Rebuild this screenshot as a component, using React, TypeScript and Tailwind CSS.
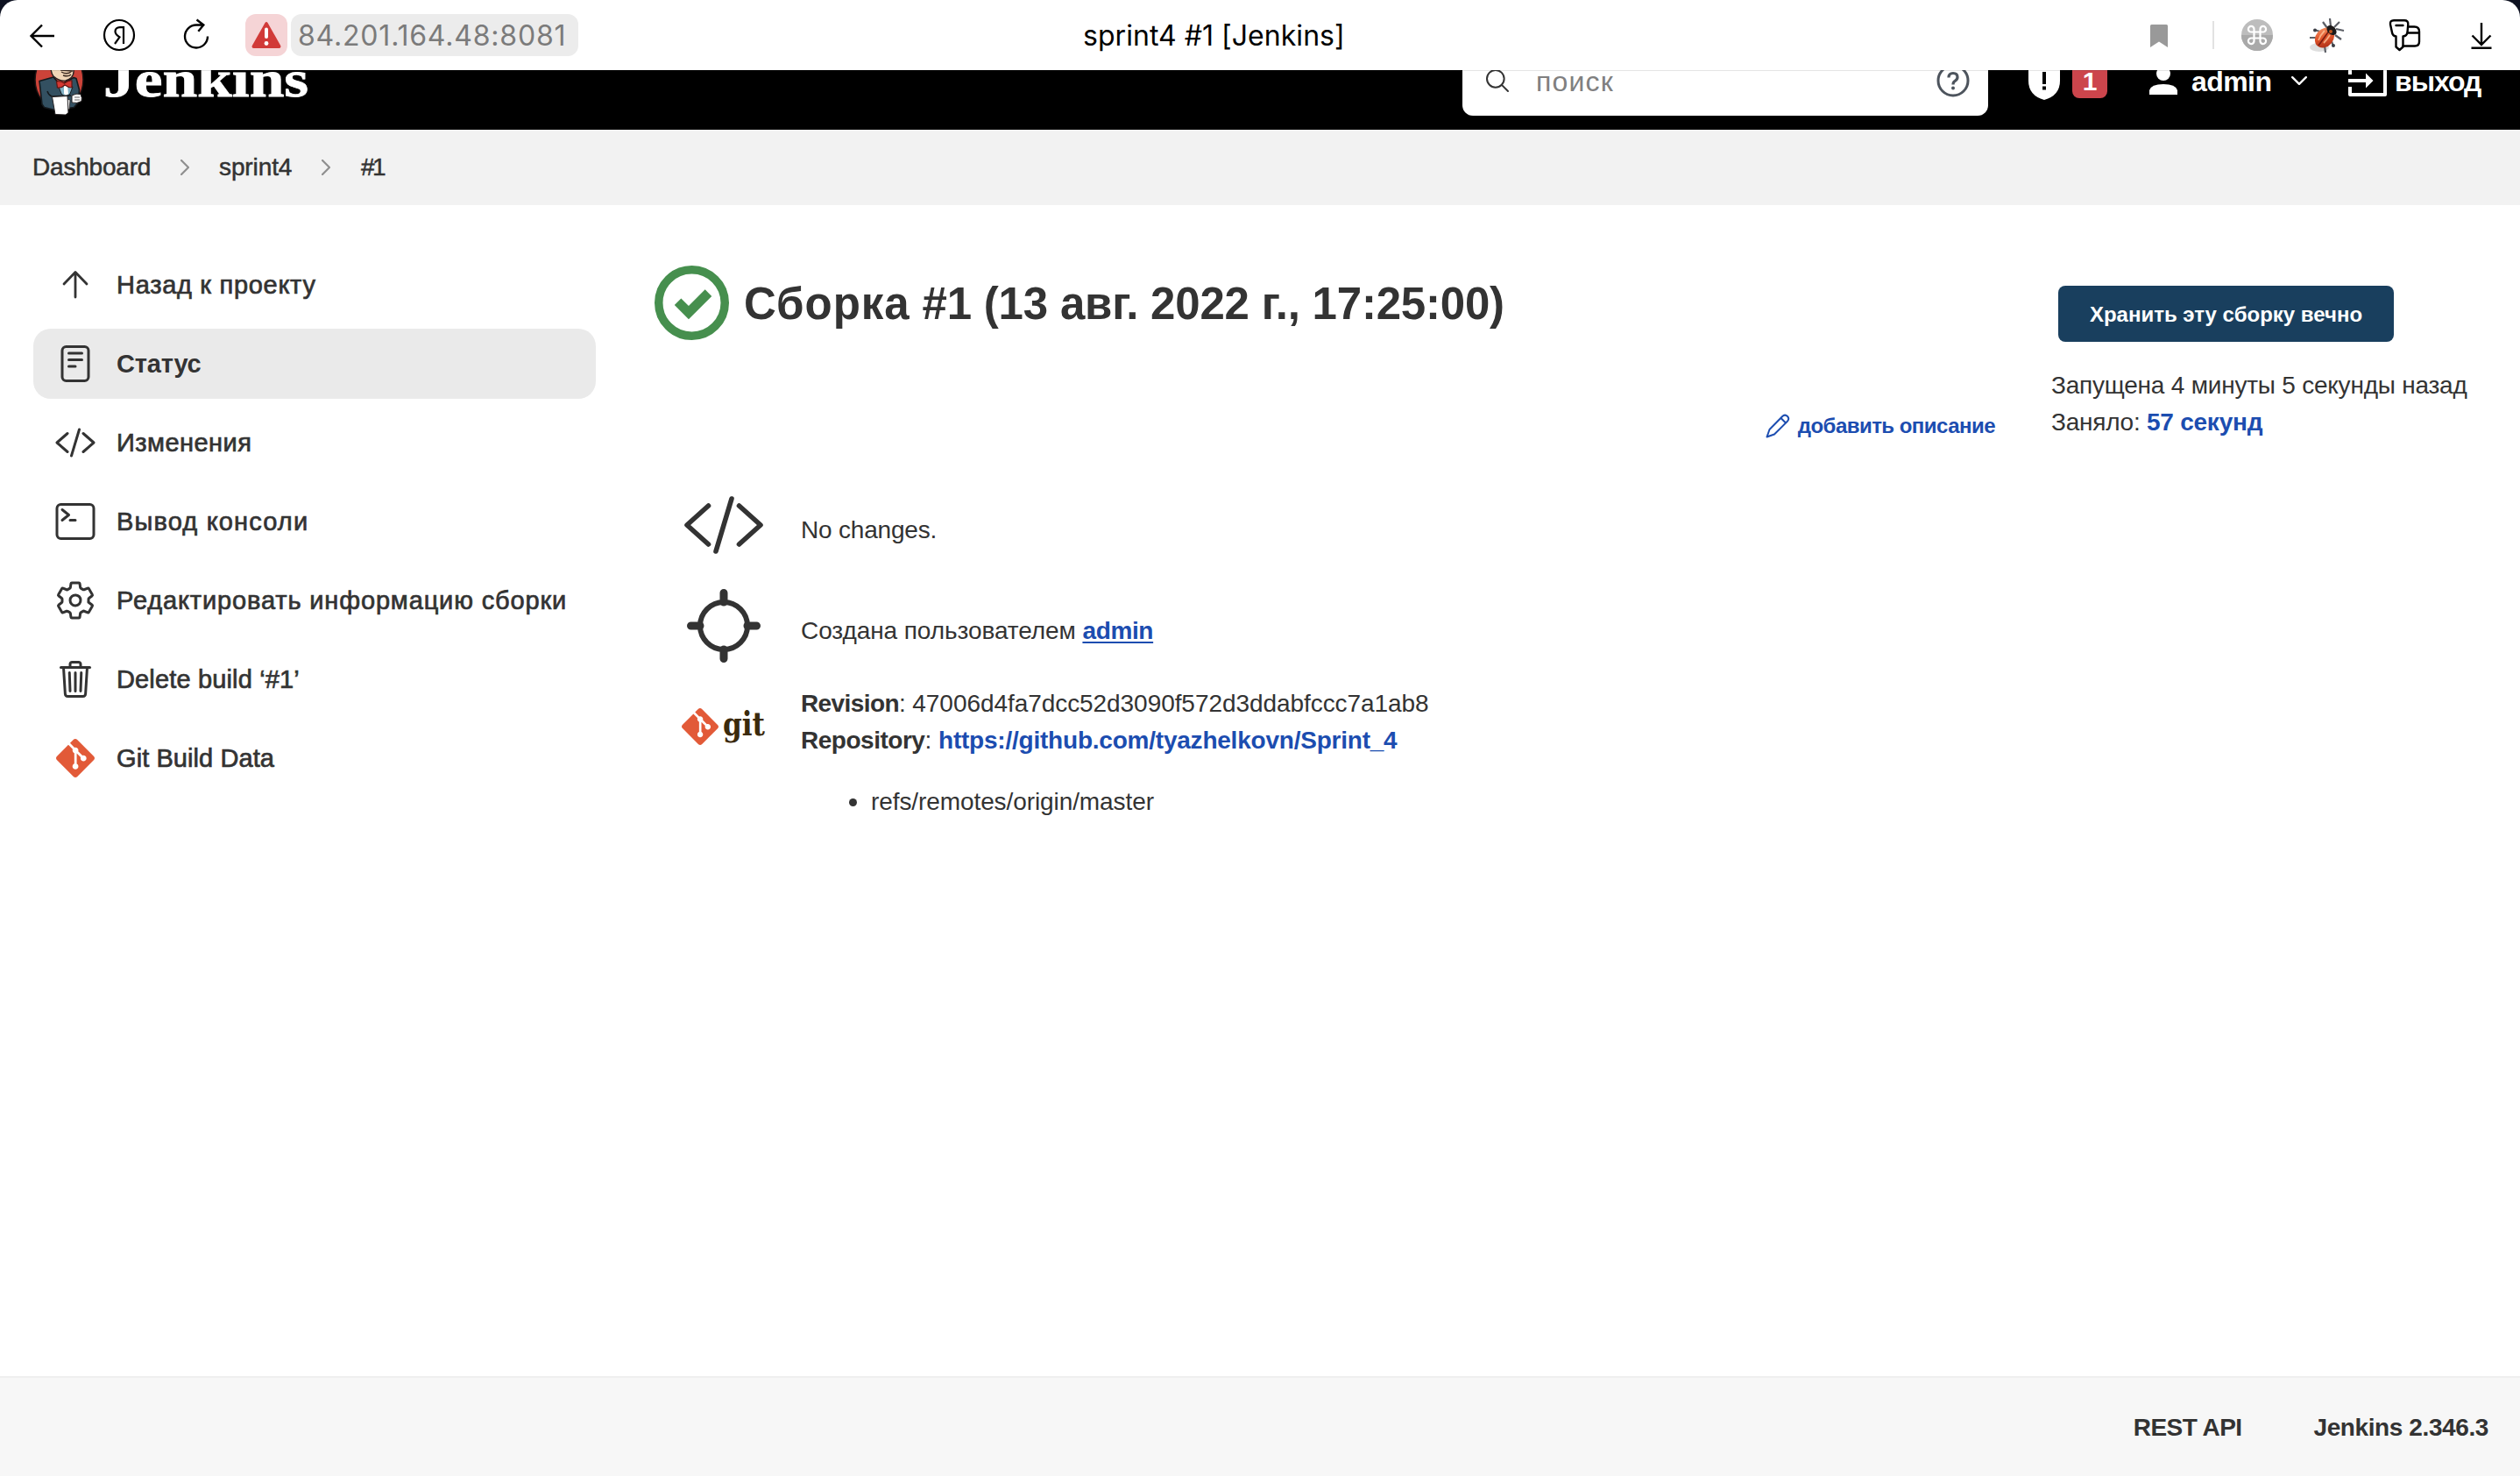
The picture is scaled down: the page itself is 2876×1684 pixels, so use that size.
import React from "react";
import {
  IoCodeSlashOutline,
  IoReaderOutline,
  IoSearchOutline,
  IoSettingsOutline,
  IoTerminalOutline,
  IoTrashOutline,
} from "react-icons/io5";
import { SiGit } from "react-icons/si";

function BrowserBar() {
  return (
    <div className="h-20 shrink-0 bg-[#0d1120]">
      <div className="flex h-20 items-center rounded-t-[20px] bg-white pr-6 pl-7 font-['Inter',sans-serif] text-[32px] leading-[40px]">
        <div className="flex w-[1208px] items-center">
          <div className="flex items-center gap-12">
            <svg className="size-10" viewBox="0 0 40 40" fill="none" stroke="#000" strokeWidth="2.4">
              <path d="M20 8.500 7.500 21 20 33.500M7.500 21H34" />
            </svg>
            <svg className="size-10" viewBox="0 0 40 40" fill="none" stroke="#000" strokeWidth="2.200">
              <circle cx="20" cy="20" r="17" />
              <path d="M25 30V11.200h-4.200c-3.600 0-5.300 2-5.300 4.800 0 2.600 1.300 4 5 6.400L15 30" />
            </svg>
            <svg className="size-10" viewBox="0 0 40 40" fill="none" stroke="#000" strokeWidth="2.400">
              <path d="M28 8.500H20.500A13 13 0 1 0 33 21.500M20.500 2.500l7.800 6-6 7.200" />
            </svg>
          </div>
          <div className="ml-9 flex h-12 w-12 items-center justify-center rounded-xl bg-[#f5d4d6]">
            <svg className="h-[30px] w-[34px]" viewBox="0 0 34 30">
              <path d="M15.500 1Q17 -1 18.500 1L33.200 27Q34 30 31 30H3Q0 30 .8 27Z" fill="#d13a38" />
              <path d="M17 8.500v8.500" stroke="#fff" strokeWidth="4" strokeLinecap="round" />
              <circle cx="17" cy="24.500" r="2.400" fill="#fff" />
            </svg>
          </div>
          <div className="ml-1 flex h-12 w-[328px] items-center rounded-xl bg-[#ececec] pt-[2px] pl-2 tracking-[0.8px] whitespace-nowrap text-[#7b7b7b]">
            84.201.164.48:8081
          </div>
        </div>
        <div className="pt-[2px] tracking-[0.04px] whitespace-nowrap text-black">sprint4 #1 [Jenkins]</div>
        <div className="ml-auto flex items-center">
          <svg className="size-10" viewBox="0 0 40 40">
            <path d="M10 9.500Q10 8 11.500 8h17Q30 8 30 9.500V34l-10-6.500L10 34Z" fill="#999" />
          </svg>
          <div className="ml-[41px] h-8 w-[2px] bg-[#e2e2e2]" />
          <svg className="ml-[29px] size-10" viewBox="0 0 40 40">
            <circle cx="20" cy="20" r="18" fill="#bdbdbd" />
            <path d="M2 20a18 18 0 0 0 36 0Z" fill="#a9a9a9" />
            <path
              d="M16.500 16.500h7v7h-7ZM16.500 16.500h-3a3.300 3.300 0 1 1 3-3.200ZM23.500 16.500v-3.200a3.300 3.300 0 1 1 3 3.200ZM23.500 23.500h3a3.300 3.300 0 1 1-3 3.200ZM16.500 23.500v3.200a3.300 3.300 0 1 1-3-3.200Z"
              fill="none"
              stroke="#fff"
              strokeWidth="2.200"
            />
          </svg>
          <svg className="ml-10 size-10" viewBox="0 0 40 40">
            <defs>
              <linearGradient id="shell" x1="0" y1="0" x2="1" y2="1">
                <stop offset="0" stopColor="#f8a070" />
                <stop offset=".5" stopColor="#e0542a" />
                <stop offset="1" stopColor="#9c2412" />
              </linearGradient>
            </defs>
            <ellipse cx="11" cy="34" rx="11" ry="5" fill="#000" opacity=".13" />
            <path
              d="M24 10l-1-9M28 11l6-6M30 13l9 2M20 12l-5-7M29 20l7 5M25 27l2 6M12 16l-7-2M8 23H0M17 32l1 8"
              stroke="#5c5f66"
              strokeWidth="2.200"
              fill="none"
            />
            <circle cx="6" cy="14.500" r="2" fill="#3c3f46" />
            <circle cx="27" cy="32" r="2" fill="#3c3f46" />
            <ellipse cx="17" cy="23" rx="10" ry="12.500" transform="rotate(40 17 23)" fill="url(#shell)" />
            <path d="M23 14 10 32" stroke="#7c1c10" strokeWidth="1.600" />
            <path d="M17 15q-5 5-7 11M23 20q-3 5-7 9" stroke="#ffc9a0" strokeWidth="1.800" fill="none" opacity=".75" />
            <ellipse cx="25" cy="14.500" rx="6.500" ry="4.500" transform="rotate(45 25 14.500)" fill="#1d1a1a" />
            <circle cx="24" cy="16" r="2" fill="#c2571f" />
          </svg>
          <svg className="ml-12 size-10" viewBox="0 0 40 40" fill="none" stroke="#000" strokeWidth="2.400" strokeLinejoin="round" strokeLinecap="round">
            <path d="M8 3.200h12q4.500 0 4.300 4.500L23.500 17q-.5 4-5 4.500V33.500l-4 3.500-4-3.500V21.500q-4-.5-4.500-4.500L4 7.700Q3.500 3.200 8 3.200ZM10.500 9h8" />
            <path d="M24.500 10.500h7q5.500 0 5.500 5.500v11.500q0 5-5 5H18.500M24.300 17.500H37" />
          </svg>
          <svg className="ml-12 size-10" viewBox="0 0 40 40" fill="none" stroke="#000" strokeWidth="2.400">
            <path d="M20 6v24.500M9.500 20.500 20 31l10.500-10.500M8.500 34.800h23" />
          </svg>
        </div>
      </div>
    </div>
  );
}

function Butler() {
  return (
    <svg className="h-[84px] w-16" viewBox="36 50 64 84">
      <ellipse cx="67.500" cy="91" rx="27.500" ry="33" fill="#cc4339" stroke="#1b1212" strokeWidth="1.500" />
      <path
        d="M45 92.500 61 88l8 9 15-8.500 3 1 3.500 13-1 14-5 6-22 3-12-3L48 119Z"
        fill="#335061"
        stroke="#14191d"
        strokeWidth="1.600"
        strokeLinejoin="round"
      />
      <path d="M58 70q-1 12 3 17 7 6 14 5 9-3 9-10V70Z" fill="#f0d6b7" stroke="#231f20" strokeWidth="1.400" />
      <path d="M70 82q7 4 12-1M72 86q6 2 9-1M69 80l14 1" fill="none" stroke="#3b2a20" strokeWidth="1.400" />
      <path d="M67 99l8-4 8 4-3 8-5 4-5-4Z" fill="#81b0c4" stroke="#14191d" strokeWidth="1" />
      <path d="M73 98h4l1 9-3 2-2-2Z" fill="#fff" />
      <path
        d="M64.500 93q5-1 9 2 5-4 8.500-3v8q-4 0-8-3-4 4-8.500 3Z"
        fill="#d33833"
        stroke="#5c1512"
        strokeWidth="1.200"
      />
      <path d="M54 104q1 4 5 6l22-1" fill="none" stroke="#14191d" strokeWidth="1.400" />
      <path d="M76 113l4 1-1 11-3-1Z" fill="#fff" stroke="#231f20" strokeWidth=".8" />
      <path d="M59.500 110.500 77 109.500l1 19-3 2.500-12-.5Z" fill="#fff" stroke="#231f20" strokeWidth="1" strokeLinejoin="round" />
      <path d="M82 109q5-3 10-1.500 2 4 1 8-5 3-11 1.500Z" fill="#fff" stroke="#231f20" strokeWidth="1" />
      <path d="M85 111h6M85 114h6" stroke="#231f20" strokeWidth=".7" />
    </svg>
  );
}

function Header() {
  return (
    <div className="relative flex h-[68px] shrink-0 flex-col justify-end overflow-hidden bg-black">
      <div className="flex h-28 shrink-0 items-center pl-9 font-bold text-white">
        <Butler />
        <div className="ml-[18px] w-[1551px] pb-[5px]">
          <span className="inline-block origin-left scale-x-[1.19] font-['Liberation_Serif',serif] text-[60px] leading-[68px] [-webkit-text-stroke:0.8px_#fff]">
            Jenkins
          </span>
        </div>
        <div className="flex h-20 w-[600px] items-center rounded-xl bg-white pl-6 font-normal">
          <IoSearchOutline className="size-8 text-[#333]" />
          <span className="ml-7 w-[456px] pt-[2px] text-[32px] tracking-[1.175px] text-[#808080]">поиск</span>
          <svg className="size-10" viewBox="0 0 40 40" fill="none" stroke="#4d545d" strokeWidth="3">
            <circle cx="20" cy="20" r="17" />
            <path d="M15 16.500q0-5 5-5t5 4.500q0 2.600-2.800 4.300Q20 21.500 20 24.500" strokeWidth="3.200" />
            <circle cx="20" cy="28.600" r="2" fill="#4d545d" stroke="none" />
          </svg>
        </div>
        <svg className="ml-[46px] h-11 w-9" viewBox="0 0 36 44">
          <path d="M18 0 36 7V22Q36 39 18 44 0 39 0 22V7Z" fill="#fff" />
          <path d="M16 12h4v14h-4ZM16 28.500h4v4h-4Z" fill="#000" />
        </svg>
        <div className="ml-[14px] flex h-10 w-10 items-center justify-center rounded-lg bg-[#cc454c] pt-[2px] text-[30px]">1</div>
        <svg className="ml-12 h-8 w-8" viewBox="0 0 32 32" fill="#fff">
          <circle cx="16" cy="8" r="8" />
          <path d="M0 32V27Q2 20 16 20t16 7v5Z" />
        </svg>
        <span className="ml-4 w-[114px] pt-[2px] text-[32px] tracking-[-0.572px]">admin</span>
        <svg className="h-[10px] w-[18px]" viewBox="0 0 18 10" fill="none" stroke="#fff" strokeWidth="2.400" strokeLinecap="round" strokeLinejoin="round">
          <path d="M1.200 1.200 9 8.800l7.800-7.600" />
        </svg>
        <svg className="ml-[47px] h-9 w-11" viewBox="0 0 44 36">
          <path d="M2 11V2h40v32H2v-9" fill="none" stroke="#fff" strokeWidth="4" strokeLinejoin="round" />
          <path d="M0 16h20V9.500L28.500 18 20 26.500V20H0Z" fill="#fff" />
        </svg>
        <span className="ml-[9px] pt-[2px] text-[32px] tracking-[-1.031px]">выход</span>
      </div>
      <div className="absolute inset-x-0 top-0 h-px bg-black/10" />
    </div>
  );
}

function Chevron() {
  return (
    <svg className="h-[18px] w-[10px]" viewBox="0 0 10 18" fill="none" stroke="#8f8f8f" strokeWidth="2.200" strokeLinecap="round">
      <path d="M1 1l8 8-8 8" />
    </svg>
  );
}

function Breadcrumbs() {
  return (
    <div className="flex h-[86px] shrink-0 items-center bg-[#f2f2f2] pl-[37px] [-webkit-text-stroke:0.5px_#333]">
      <span className="w-[169px] tracking-[-0.2px]">Dashboard</span>
      <Chevron />
      <span className="ml-[34px] w-[117px] tracking-[-0.1px]">sprint4</span>
      <Chevron />
      <span className="ml-[35px] tracking-[-2.5px]">#1</span>
    </div>
  );
}

function SideItem({ icon, children }: { icon: React.ReactNode; children: React.ReactNode }) {
  return (
    <div className="flex h-20 items-center gap-[23px] pl-6 whitespace-nowrap [&>svg]:size-12 [&>svg]:shrink-0">
      {icon}
      {children}
    </div>
  );
}

function ArrowUp() {
  return (
    <svg viewBox="0 0 48 48" fill="none" stroke="#333" strokeWidth="2.800" strokeLinecap="round" strokeLinejoin="round">
      <path d="M11 23 24 9.500 37 23M24 10v28" />
    </svg>
  );
}

function Sidebar() {
  return (
    <div className="flex w-[642px] shrink-0 flex-col gap-[10px] pt-[51px] text-[29px]">
      <SideItem icon={<ArrowUp />}>
        <span className="tracking-[0.7px] [-webkit-text-stroke:0.7px_#333]">Назад к проекту</span>
      </SideItem>
      <div className="rounded-[20px] bg-[#eaeaea]">
        <SideItem icon={<IoReaderOutline />}>
          <span className="font-bold tracking-[-0.2px]">Статус</span>
        </SideItem>
      </div>
      <SideItem icon={<IoCodeSlashOutline />}>
        <span className="tracking-[0.45px] [-webkit-text-stroke:0.7px_#333]">Изменения</span>
      </SideItem>
      <SideItem icon={<IoTerminalOutline />}>
        <span className="tracking-[1.15px] [-webkit-text-stroke:0.7px_#333]">Вывод консоли</span>
      </SideItem>
      <SideItem icon={<IoSettingsOutline />}>
        <span className="tracking-[0.85px] [-webkit-text-stroke:0.7px_#333]">Редактировать информацию сборки</span>
      </SideItem>
      <SideItem icon={<IoTrashOutline />}>
        <span className="tracking-[0.15px] [-webkit-text-stroke:0.7px_#333]">Delete build ‘#1’</span>
      </SideItem>
      <SideItem icon={<SiGit className="p-[2px] text-[#e25a38]" />}>
        <span className="tracking-[0.08px] [-webkit-text-stroke:0.7px_#333]">Git Build Data</span>
      </SideItem>
    </div>
  );
}

function BuildDetails() {
  return (
    <div className="ml-[67px] w-[1530px] shrink-0 pt-[69px]">
      <div className="flex h-[85px] items-center">
        <svg className="size-[85px]" viewBox="0 0 84 84">
          <circle cx="42" cy="42" r="37.300" fill="none" stroke="#468f4e" strokeWidth="9.400" />
          <path d="M22.500 44.500 30 37l8.500 8.500L57 27l7.500 7.500L38.500 60.500Z" fill="#468f4e" />
        </svg>
        <h1 className="ml-[17px] pt-[2px] text-[51px] leading-[60px] font-bold tracking-[-0.2px] whitespace-nowrap">
          <span className="tracking-[0.95px]">Сборка</span> #1 (13 авг. 2022 г., 17:25:00)
        </h1>
      </div>

      <div className="mt-[78px] flex h-10 items-center justify-end text-2xl font-bold tracking-[-0.53px] text-[#1c4db0]">
        <svg className="h-7 w-7" viewBox="0 0 28 28" fill="none" stroke="#1c4db0" strokeWidth="2" strokeLinejoin="round">
          <path d="M1.500 26.500 4.500 18 19 3.200q3-3 6-.2 2.600 3-.2 5.800L10 23.500ZM17.500 5l5.500 5.500" />
        </svg>
        <span className="ml-[9px]">добавить описание</span>
      </div>

      <div className="mt-[41px] flex h-[115px] items-center">
        <div className="flex w-40 justify-center pb-[12px] pr-[2px]">
          <svg className="h-[68px] w-[92px]" viewBox="0 0 92 68" fill="none" stroke="#333" strokeWidth="5.600" strokeLinecap="round" strokeLinejoin="round">
            <path d="M28.500 12 4 34l24.500 22M63.500 12 88 34 63.500 56M55 4 37 64" />
          </svg>
        </div>
        <span className="pl-[7px] tracking-[-0.2px]">No changes.</span>
      </div>

      <div className="flex h-[115px] items-center">
        <div className="flex w-40 justify-center pb-[12px] pr-[2px]">
          <svg className="size-[84px]" viewBox="0 0 84 84" fill="none" stroke="#333">
            <circle cx="42" cy="42" r="27" strokeWidth="6" />
            <path d="M42 4.500V15M42 69v10.500M4.500 42H15M69 42h10.500" strokeWidth="9" strokeLinecap="round" />
          </svg>
        </div>
        <span className="pl-[7px] tracking-[-0.08px]">
          Создана пользователем{" "}
          <a className="font-bold tracking-[-0.35px] text-[#1c4db0] underline decoration-2 underline-offset-[3px]">admin</a>
        </span>
      </div>

      <div className="flex">
        <div className="flex w-40 pt-[31px] pl-[31px]">
          <SiGit className="size-[42px] text-[#e25a38]" />
          <span className="ml-[5px] inline-block h-[42px] w-12 origin-left scale-x-[0.82] font-['DejaVu_Serif',serif] text-[38px] leading-[36px] font-bold text-[#3b2a0c]">
            git
          </span>
        </div>
        <div className="pt-[5px] pl-[7px]">
          <div className="whitespace-pre">
            <b className="tracking-[-0.6px]">Revision</b>
            <span className="tracking-[-0.06px]">: 47006d4fa7dcc52d3090f572d3ddabfccc7a1ab8</span>
          </div>
          <div className="whitespace-pre">
            <b className="tracking-[-0.48px]">Repository</b>:{" "}
            <a className="font-bold tracking-[-0.22px] text-[#1c4db0]">https://github.com/tyazhelkovn/Sprint_4</a>
          </div>
          <div className="mt-7 flex items-center pl-[55px]">
            <span className="size-[9px] rounded-full bg-[#333]" />
            <span className="ml-4 tracking-[-0.09px]">refs/remotes/origin/master</span>
          </div>
        </div>
      </div>
    </div>
  );
}

function BuildMeta() {
  return (
    <div className="ml-16 pt-[92px] whitespace-nowrap">
      <button className="ml-2 flex h-16 w-[383px] items-center justify-center rounded-lg bg-[#193f5e] pt-[2px] text-2xl font-bold text-white">
        Хранить эту сборку вечно
      </button>
      <div className="mt-[29px] tracking-[-0.22px]">Запущена 4 минуты 5 секунды назад</div>
      <div className="tracking-[-0.24px]">
        Заняло: <a className="font-bold text-[#1c4db0]">57 секунд</a>
      </div>
    </div>
  );
}

export default function App() {
  return (
    <div className="flex h-[1684px] w-[2876px] flex-col overflow-hidden bg-white font-['Liberation_Sans',Arial,sans-serif] text-[28px] leading-[42px] text-[#333]">
      <BrowserBar />
      <Header />
      <Breadcrumbs />
      <div className="flex min-h-0 flex-1 pl-[38px]">
        <Sidebar />
        <BuildDetails />
        <BuildMeta />
      </div>
      <div className="flex h-[114px] shrink-0 items-center justify-end gap-[82px] border-t-2 border-[#efefef] bg-[#f7f7f7] pt-px pr-9 font-bold">
        <span className="tracking-[-0.55px]">REST API</span>
        <span className="tracking-[-0.4px]">Jenkins 2.346.3</span>
      </div>
    </div>
  );
}
